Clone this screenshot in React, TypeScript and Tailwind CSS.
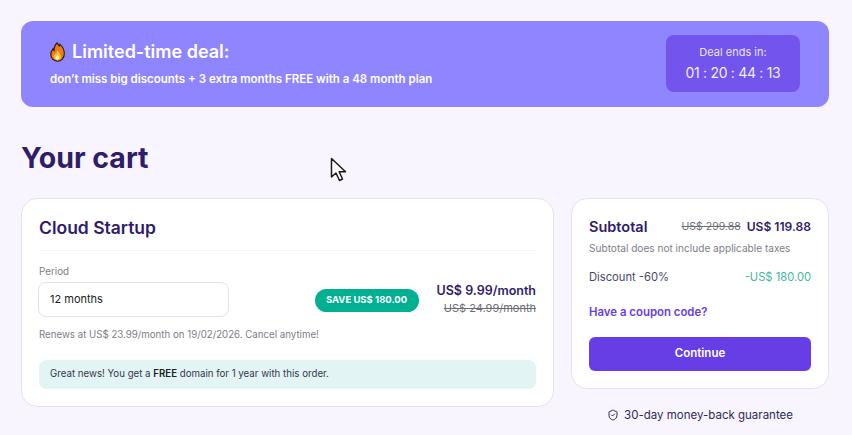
import React from 'react';
import { ShieldCheck } from 'lucide-react';

const font = 'font-["Inter",sans-serif]';

function Flame() {
  return (
    <svg width="15" height="20" viewBox="0 0 15 20" className="shrink-0">
      <path d="M7 .8c.6 1.600 1.600 2 2.200 3.200.5-.5.7-1 .7-1.600 2.400 2 4.400 5.300 4.400 9.300 0 4.300-3 7.500-6.900 7.500S.8 16.200.8 12.400C.8 9.600 2 8.200 3 6.800c.2.900.5 1.400 1.100 1.800C4 5.600 5 2.600 7 .8Z" fill="#ef7a1a" stroke="#2a1a10" strokeWidth="1.100" />
      <path d="M7.600 8.500c.4 1.500 3.500 3 3.500 6 0 2-1.600 3.500-3.600 3.500s-3.700-1.400-3.700-3.400c0-1.500 1-2.500 1.700-3.300.2.600.4.900.8 1.100.1-1.500.5-3 1.300-3.900Z" fill="#fbc02d" />
      <path d="M7.500 13c.9 1 1.800 1.700 1.800 2.900 0 1-.8 1.800-1.800 1.800s-1.900-.8-1.900-1.800c0-1.200 1.200-1.800 1.900-2.900Z" fill="#fff3b0" />
    </svg>
  );
}

function Cursor() {
  return (
    <svg width="18" height="25" viewBox="0 0 18 25" className="absolute left-[330px] top-[157px]">
      <path d="M1.500 1.500v18.500l4.500-4 3.500 7.500 3-1.500-3.300-7.200h6.300L1.500 1.500Z" fill="#fff" stroke="#1a1a1a" strokeWidth="1.500" strokeLinejoin="round" />
    </svg>
  );
}

function Banner() {
  return (
    <div className="flex h-[86px] w-[808px] items-center justify-between rounded-xl bg-[#8f85ff] px-[29px] text-white">
      <div>
        <div className="-mt-px flex items-center gap-[7px] text-[18px] font-semibold leading-6">
          <Flame />
          <span>Limited-time deal:</span>
        </div>
        <p className="mt-[7px] text-[11.500px] font-semibold leading-4">
          don’t miss big discounts + 3 extra months FREE with a 48 month plan
        </p>
      </div>
      <div className="mb-px flex h-[57px] w-[134px] flex-col items-center justify-center rounded-lg bg-[#7354ec]">
        <span className="text-[11px] leading-4 text-[#e9e4ff]">Deal ends in:</span>
        <span className="mt-[3px] text-[14px] leading-5 tracking-[-0.3px] text-[#f1edff]">01 : 20 : 44 : 13</span>
      </div>
    </div>
  );
}

function CartCard() {
  return (
    <div className="h-[209px] w-[533px] rounded-2xl border border-[#e4e2f0] bg-white px-[17px] pt-[17px]">
      <h2 className="text-[17.500px] font-semibold leading-6 text-[#2f1c6a]">Cloud Startup</h2>
      <div className="mt-[10px] h-px bg-[#f5f4f9]" />
      <div className="mt-[14px] flex items-center">
        <div className="-ml-px">
          <p className="ml-px text-[9.800px] leading-[13px] text-[#7d7d86]">Period</p>
          <div className="mt-[4px] flex h-[35px] w-[191px] items-center rounded-lg border border-[#e2e2e8] pl-[11px] text-[11px] text-[#1d1e20]">
            12 months
          </div>
        </div>
        <div className="ml-auto mt-[19px] flex h-[23px] w-[104px] items-center justify-center rounded-full bg-[#00b090] text-[9.500px] font-bold text-white">
          SAVE US$ 180.00
        </div>
        <div className="ml-[18px] mt-[17px] text-right">
          <p className="text-[12.500px] font-semibold leading-[18px] text-[#2f1c6a]">US$ 9.99/month</p>
          <p className="text-[11px] leading-[17px] text-[#6d6d77] line-through">US$ 24.99/month</p>
        </div>
      </div>
      <p className="mt-[11px] text-[9.700px] leading-[13px] text-[#7d7d86]">
        Renews at US$ 23.99/month on 19/02/2026. Cancel anytime!
      </p>
      <div className="mt-[19px] flex h-[29px] items-center rounded-lg bg-[#e3f4f4] pl-[11px] text-[9.700px] text-[#36344d]">
        <span>
          Great news! You get a <b className="font-semibold text-[#1d1e20]">FREE</b> domain for 1 year with this order.
        </span>
      </div>
    </div>
  );
}

function SummaryCard() {
  return (
    <div className="w-[258px]">
      <div className="h-[191px] rounded-2xl border border-[#e4e2f0] bg-white px-[17px] pt-[18px]">
        <div className="flex items-center justify-between">
          <span className="text-[14.500px] font-semibold leading-5 text-[#2f1c6a]">Subtotal</span>
          <div className="flex items-center gap-[6px]">
            <span className="text-[10.500px] text-[#6d6d77] line-through">US$ 299.88</span>
            <span className="text-[12.100px] font-semibold text-[#2f1c6a]">US$ 119.88</span>
          </div>
        </div>
        <p className="mt-[5px] text-[10.100px] leading-[13px] text-[#7d7d86]">Subtotal does not include applicable taxes</p>
        <div className="mt-[14px] flex items-center justify-between text-[11.200px] leading-4">
          <span className="text-[#4a4668]">Discount -60%</span>
          <span className="text-[#3fb999]">-US$ 180.00</span>
        </div>
        <p className="mt-[19px] text-[11.400px] font-semibold leading-4 text-[#673de6]">Have a coupon code?</p>
        <button className="mt-[17px] flex h-[34px] w-full items-center justify-center rounded-md bg-[#673de6] text-[11.500px] font-semibold text-white">
          Continue
        </button>
      </div>
      <div className="mt-[18px] flex items-center justify-center gap-[5px] text-[11.500px] leading-4 text-[#2f2a55]">
        <ShieldCheck className="h-3 w-3" />
        30-day money-back guarantee
      </div>
    </div>
  );
}

export default function App() {
  return (
    <div className={`relative h-[435px] w-[852px] overflow-hidden bg-[#f8f5ff] px-[21px] pt-[21px] ${font}`}>
      <Banner />
      <h1 className="mt-[33px] text-[28.500px] font-bold leading-9 text-[#2f1c6a]">Your cart</h1>
      <div className="mt-[22px] flex items-start gap-[17px]">
        <CartCard />
        <SummaryCard />
      </div>
      <Cursor />
    </div>
  );
}
